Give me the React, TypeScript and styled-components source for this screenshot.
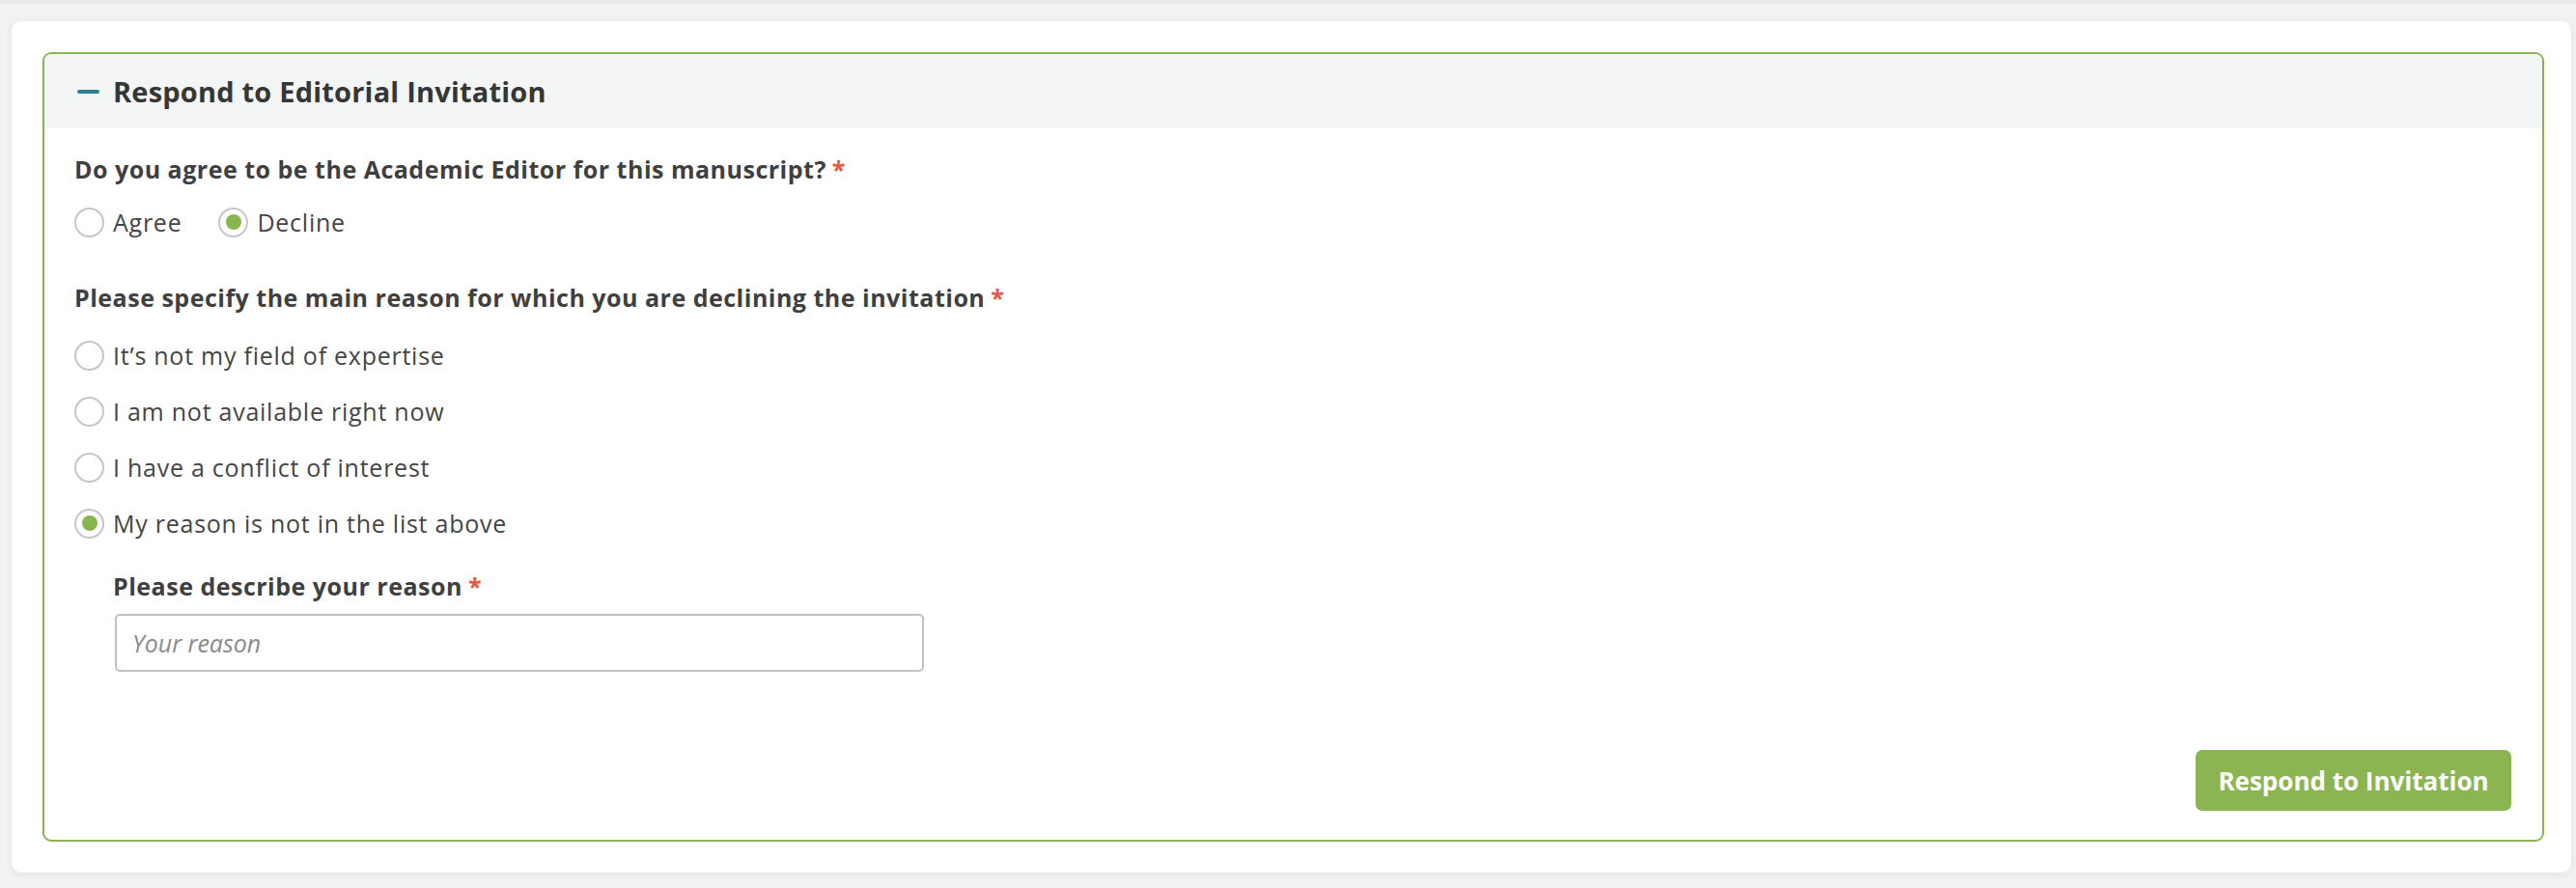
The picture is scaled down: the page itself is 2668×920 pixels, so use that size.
import React, { useState } from "react";
import styled, { createGlobalStyle } from "styled-components";

const GlobalStyle = createGlobalStyle`
  body {
    margin: 0;
    background: #f2f2f2;
    font-family: "Open Sans", Lato, sans-serif;
    color: #3f3f3f;
  }
`;

const Page = styled.div`
  border-top: 4px solid #e8e8e8;
  padding: 18px 5px 17px 12px;
`;

const Card = styled.div`
  background: #fff;
  border-radius: 10px;
  box-shadow: 0 2px 8px rgba(0, 0, 0, 0.07);
  padding: 32px 28px 32px 32px;
`;

const Panel = styled.section`
  border: 2px solid #8ab356;
  border-radius: 9px;
  overflow: hidden;
`;

const PanelHeader = styled.header`
  display: flex;
  align-items: center;
  gap: 14px;
  height: 77px;
  padding-left: 34px;
  background: #f4f5f5;
`;

const Dash = styled.span`
  width: 23px;
  height: 4px;
  border-radius: 2px;
  background: #2f7f96;
`;

const Title = styled.h2`
  margin: 0;
  font-size: 29px;
  font-weight: 700;
  letter-spacing: 0.2px;
  color: #363636;
`;

const PanelBody = styled.div`
  display: flex;
  flex-direction: column;
  padding: 26px 32px 30px 31px;
`;

const Label = styled.div<{ $indent?: boolean }>`
  font-size: 25px;
  font-weight: 700;
  line-height: 32px;
  letter-spacing: 0.5px;
  margin-left: ${(p) => (p.$indent ? "40px" : "0")};
`;

const Required = styled.span`
  color: #e5573f;
  margin-left: 6px;
`;

const InlineGroup = styled.div`
  display: flex;
  gap: 38px;
  margin: 23px 0 46px;
`;

const StackGroup = styled.div`
  display: flex;
  flex-direction: column;
  gap: 26px;
  margin: 28px 0 33px;
`;

const Option = styled.label`
  display: flex;
  align-items: center;
  gap: 9px;
  height: 32px;
  font-size: 25px;
  letter-spacing: 0.75px;
  color: #454545;
  cursor: pointer;
`;

const Circle = styled.span<{ $on: boolean }>`
  box-sizing: border-box;
  width: 31px;
  height: 31px;
  border-radius: 50%;
  border: 2px solid #c6c6c6;
  display: flex;
  align-items: center;
  justify-content: center;

  &::after {
    content: "";
    width: 16px;
    height: 16px;
    border-radius: 50%;
    background: ${(p) => (p.$on ? "#8ab54f" : "transparent")};
  }
`;

const ReasonInput = styled.input`
  box-sizing: border-box;
  width: 838px;
  height: 60px;
  margin: 13px 0 0 42px;
  padding: 0 16px;
  border: 2px solid #c2c2c2;
  border-radius: 5px;
  font-family: inherit;
  font-size: 25px;
  color: #444;
  outline: none;

  &::placeholder {
    color: #8a8a8a;
    font-style: italic;
  }
`;

const Footer = styled.div`
  display: flex;
  justify-content: flex-end;
  margin-top: 81px;
`;

const SubmitButton = styled.button`
  width: 327px;
  height: 63px;
  border: none;
  border-radius: 7px;
  background: #8bb553;
  color: #fff;
  font-family: inherit;
  font-size: 26px;
  font-weight: 700;
  cursor: pointer;
`;

const reasons = [
  "It\u2019s not my field of expertise",
  "I am not available right now",
  "I have a conflict of interest",
  "My reason is not in the list above",
];

function Radio({ on, text, onPick }: { on: boolean; text: string; onPick: () => void }) {
  return (
    <Option onClick={onPick}>
      <Circle $on={on} />
      {text}
    </Option>
  );
}

export default function App() {
  const [answer, setAnswer] = useState("Decline");
  const [reason, setReason] = useState(3);

  return (
    <Page>
      <GlobalStyle />
      <Card>
        <Panel>
          <PanelHeader>
            <Dash />
            <Title>Respond to Editorial Invitation</Title>
          </PanelHeader>
          <PanelBody>
            <Label>
              Do you agree to be the Academic Editor for this manuscript?
              <Required>*</Required>
            </Label>
            <InlineGroup>
              {["Agree", "Decline"].map((a) => (
                <Radio key={a} text={a} on={answer === a} onPick={() => setAnswer(a)} />
              ))}
            </InlineGroup>

            <Label>
              Please specify the main reason for which you are declining the invitation
              <Required>*</Required>
            </Label>
            <StackGroup>
              {reasons.map((r, i) => (
                <Radio key={r} text={r} on={reason === i} onPick={() => setReason(i)} />
              ))}
            </StackGroup>

            <Label $indent>
              Please describe your reason<Required>*</Required>
            </Label>
            <ReasonInput placeholder="Your reason" />

            <Footer>
              <SubmitButton>Respond to Invitation</SubmitButton>
            </Footer>
          </PanelBody>
        </Panel>
      </Card>
    </Page>
  );
}
